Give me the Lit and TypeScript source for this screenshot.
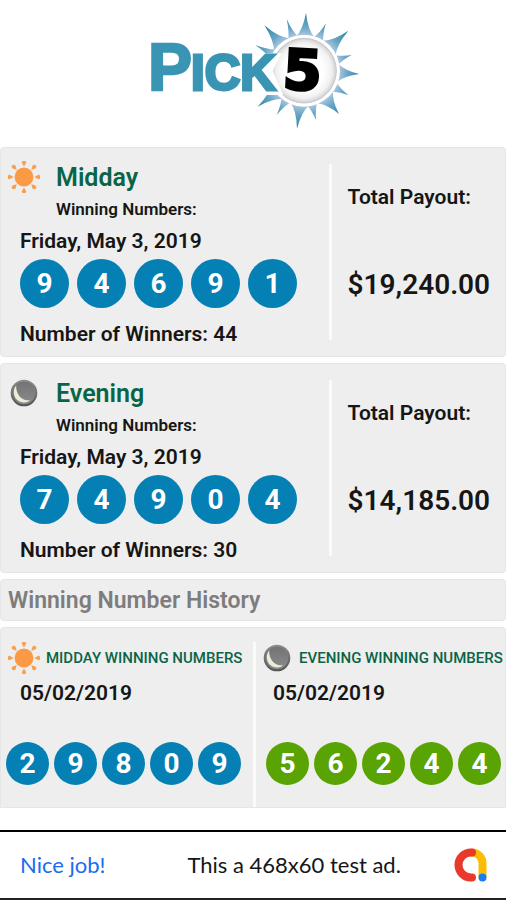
import { LitElement, html, svg, css } from "lit";
import { customElement, property } from "lit/decorators.js";

type Draw = "midday" | "evening";

@customElement("draw-icon")
class DrawIcon extends LitElement {
  @property() kind: Draw = "midday";

  static styles = css`
    :host { display: block; width: 32px; height: 32px; flex: none; }
    svg { display: block; width: 100%; height: 100%; }
  `;

  render() {
    if (this.kind === "midday") {
      return html`<svg viewBox="0 0 32 32" aria-hidden="true">
        <circle cx="16" cy="16" r="9.4" fill="#fb9a45"></circle>
        ${[0, 45, 90, 135, 180, 225, 270, 315].map(
          (a) => svg`<path transform="rotate(${a} 16 16)" fill="#f9a050"
            d="M16 5.6 L14.2 2.6 A2.1 2.1 0 1 1 17.8 2.6 Z"></path>`
        )}
      </svg>`;
    }
    return html`<svg viewBox="0 0 32 32" aria-hidden="true">
      <defs>
        <linearGradient id="disc" x1="0" y1="0" x2="0" y2="1">
          <stop offset="0" stop-color="#727272"></stop>
          <stop offset="1" stop-color="#8c8c8c"></stop>
        </linearGradient>
        <linearGradient id="rim" x1="0" y1="0" x2="0" y2="1">
          <stop offset="0" stop-color="#8c8c8c"></stop>
          <stop offset="1" stop-color="#555"></stop>
        </linearGradient>
      </defs>
      <circle cx="16" cy="16" r="12.3" fill="url(#disc)" stroke="url(#rim)" stroke-width="2"></circle>
      <path fill="#eeecd8" d="M8.2 8.5 C4.800 12.500 5 18.500 8.700 22.500 C12.500 26.300 18.500 26.500 22 23.300 C17 23.800 12.500 21.500 10.300 17.500 C8.600 14.300 8 11.500 8.200 8.500 Z"></path>
    </svg>`;
  }
}

@customElement("number-balls")
class NumberBalls extends LitElement {
  @property() digits = "";
  @property({ reflect: true }) tone: "blue" | "green" = "blue";
  @property({ reflect: true }) size: "large" | "small" = "large";

  static styles = css`
    :host { display: block; }
    .row { display: flex; gap: 8px; margin: 0; padding: 0; list-style: none; }
    .ball {
      display: flex; align-items: center; justify-content: center; flex: none;
      width: 49px; height: 49px; border-radius: 50%;
      background: #0580b5; color: #fff; font-size: 28px; font-weight: 700;
    }
    :host([size="small"]) .row { gap: 5px; }
    :host([size="small"]) .ball { width: 43px; height: 43px; }
    :host([tone="green"]) .ball { background: #59a302; }
  `;

  render() {
    return html`<ol class="row">
      ${[...this.digits].map((d) => html`<li class="ball">${d}</li>`)}
    </ol>`;
  }
}

// Ray tips of the logo's sunburst, with the half width of each ray's base.
const CENTER = { x: 492, y: 212 };
const RAYS: [number, number, number][] = [
  [498, 38, 22], [558, 70, 13], [625, 92, 24], [635, 165, 13], [658, 222, 22],
  [625, 285, 13], [597, 342, 24], [528, 360, 13], [471, 386, 22], [410, 345, 13],
  [353, 320, 24], [346, 135, 15], [373, 76, 25], [440, 57, 13],
];

function rayPath([x, y, half]: [number, number, number]) {
  const dx = x - CENTER.x;
  const dy = y - CENTER.y;
  const len = Math.hypot(dx, dy);
  const ux = dx / len;
  const uy = dy / len;
  const at = (r: number, s: number) =>
    `${(CENTER.x + ux * r - uy * s).toFixed(1)} ${(CENTER.y + uy * r + ux * s).toFixed(1)}`;
  return `M${at(100, half * 1.3)} Q${at(122, half * 0.35)} ${x} ${y} Q${at(122, -half * 0.35)} ${at(100, -half * 1.3)} Z`;
}

@customElement("app-root")
class AppRoot extends LitElement {
  static styles = css`
    :host {
      display: flex; flex-direction: column; min-height: 100vh;
      background: #fff; color: #161616;
      font-family: Roboto, "Liberation Sans", sans-serif; font-weight: 600;
    }
    h1, h2, h3, p { margin: 0; font-weight: 600; }
    .header { display: flex; justify-content: center; padding: 0 0 2px 4px; }
    .logo { display: block; width: 230px; height: 145px; }
    .wordmark { font-family: "Liberation Sans", sans-serif; font-weight: 700; fill: #3a94b4; stroke: #3a94b4; }
    .five { font-family: "DejaVu Sans", sans-serif; font-weight: 700; fill: #000; stroke: #000; }
    .main { display: flex; flex-direction: column; gap: 6px; }
    .card {
      box-sizing: border-box; background: #eee; border: 1px solid #e6e6e6; border-radius: 4px;
    }
    .draw { display: grid; grid-template-columns: 65% 1fr; padding: 13px 0 10px; }
    .result-head { display: grid; grid-template-columns: 32px 1fr; column-gap: 16px; padding-left: 7px; margin-bottom: 6px; }
    .name { color: #0a6446; font-size: 25px; line-height: 34px; }
    .sub { grid-column: 2; font-size: 17px; line-height: 28px; }
    .details { display: flex; flex-direction: column; padding-left: 19px; font-size: 21px; line-height: 24px; }
    .date { margin-bottom: 6px; }
    .winners { margin-top: 14px; }
    .payout { border-left: 3px solid #fbfbfb; margin: 3px 0 6px; padding: 21px 0 0 16px; }
    .payout-label { font-size: 21px; line-height: 24px; }
    .amount { font-size: 28px; line-height: 32px; margin-top: 60px; }
    .history-title { padding: 6px 7px 4px; color: #7d7d7d; font-size: 23px; line-height: 30px; }
    .history { display: grid; grid-template-columns: 1fr 1fr; padding-top: 14px; border-bottom-left-radius: 0; border-bottom-right-radius: 0; }
    .past { padding: 0 0 22px 5px; }
    .past + .past { border-left: 3px solid #fbfbfb; padding-left: 3px; }
    .past-head { display: flex; align-items: center; gap: 6px; padding-left: 2px; white-space: nowrap; }
    .past-name { color: #0a6446; font-size: 15px; font-weight: 500; line-height: 32px; }
    .past-date { padding-left: 14px; margin: 7px 0 37px; font-size: 21px; line-height: 24px; }
    .past + .past .past-balls { padding-left: 7px; }
    .ad {
      display: flex; align-items: center; box-sizing: border-box;
      height: 70px; margin-top: auto; padding: 0 18px 0 20px;
      border-top: 2px solid #000; border-bottom: 2px solid #222;
      font-family: Lato, sans-serif; font-size: 22px; font-weight: 400; line-height: 28px;
      white-space: nowrap;
    }
    .ad-link { color: #1a6cf0; text-decoration: none; margin-right: 82px; }
    .ad-text { flex: 1; }
    .ad-logo { display: block; flex: none; width: 34px; height: 34px; }
  `;

  private logo() {
    return html`<svg class="logo" viewBox="0 0 690 435" role="img" aria-label="Pick 5">
      <defs>
        <radialGradient id="ray" gradientUnits="userSpaceOnUse" cx="492" cy="212" r="172">
          <stop offset="0.58" stop-color="#b9cfe4"></stop>
          <stop offset="0.76" stop-color="#6ba6c6"></stop>
          <stop offset="1" stop-color="#2c87a4"></stop>
        </radialGradient>
        <radialGradient id="orb">
          <stop offset="0.6" stop-color="#fff"></stop>
          <stop offset="0.85" stop-color="#f1f1f1"></stop>
          <stop offset="1" stop-color="#d0d0d4"></stop>
        </radialGradient>
      </defs>
      ${RAYS.map((r) => svg`<path d=${rayPath(r)} fill="url(#ray)"></path>`)}
      <circle cx="492" cy="212" r="108" fill="#fff"></circle>
      <circle cx="492" cy="212" r="97" fill="url(#orb)" stroke="#c8c8cc" stroke-width="3"></circle>
      <path d="M340 160 H424 L398 212 L430 285 H340 Z" fill="#fff"></path>
      <text class="wordmark" x="24" y="270" font-size="198" stroke-width="7">P</text>
      <text class="wordmark" x="153" y="270" font-size="148" stroke-width="9">ICK</text>
      <text class="five" x="430" y="269" font-size="166" stroke-width="9" transform="rotate(3 492 212)">5</text>
    </svg>`;
  }

  private draw(kind: Draw, name: string, digits: string, winners: number, amount: string) {
    return html`<section class="card draw">
      <div class="result">
        <div class="result-head">
          <draw-icon .kind=${kind}></draw-icon>
          <h2 class="name">${name}</h2>
          <p class="sub">Winning Numbers:</p>
        </div>
        <div class="details">
          <p class="date">Friday, May 3, 2019</p>
          <number-balls digits=${digits}></number-balls>
          <p class="winners">Number of Winners: ${winners}</p>
        </div>
      </div>
      <div class="payout">
        <p class="payout-label">Total Payout:</p>
        <p class="amount">${amount}</p>
      </div>
    </section>`;
  }

  private past(kind: Draw, name: string, digits: string, tone: string) {
    return html`<article class="past">
      <div class="past-head">
        <draw-icon .kind=${kind}></draw-icon>
        <h3 class="past-name">${name}</h3>
      </div>
      <p class="past-date">05/02/2019</p>
      <number-balls class="past-balls" size="small" tone=${tone} digits=${digits}></number-balls>
    </article>`;
  }

  render() {
    return html`
      <header class="header"><h1>${this.logo()}</h1></header>
      <main class="main">
        ${this.draw("midday", "Midday", "94691", 44, "$19,240.00")}
        ${this.draw("evening", "Evening", "74904", 30, "$14,185.00")}
        <h2 class="card history-title">Winning Number History</h2>
        <section class="card history">
          ${this.past("midday", "MIDDAY WINNING NUMBERS", "29809", "blue")}
          ${this.past("evening", "EVENING WINNING NUMBERS", "56244", "green")}
        </section>
      </main>
      <footer class="ad">
        <a class="ad-link" href="#">Nice job!</a>
        <span class="ad-text">This a 468x60 test ad.</span>
        <svg class="ad-logo" viewBox="0 0 34 34" aria-hidden="true">
          <path d="M17 4.500 C24 4.500 28.500 9 28.500 16 V29" fill="none" stroke="#fbbc04" stroke-width="8"></path>
          <path d="M18 4.500 H17 A12.500 12.500 0 0 0 17 29.500 H18" fill="none" stroke="#e8392b" stroke-width="8" stroke-linecap="round"></path>
          <circle cx="28.500" cy="29.500" r="4" fill="#1a7cf0"></circle>
        </svg>
      </footer>
    `;
  }
}
